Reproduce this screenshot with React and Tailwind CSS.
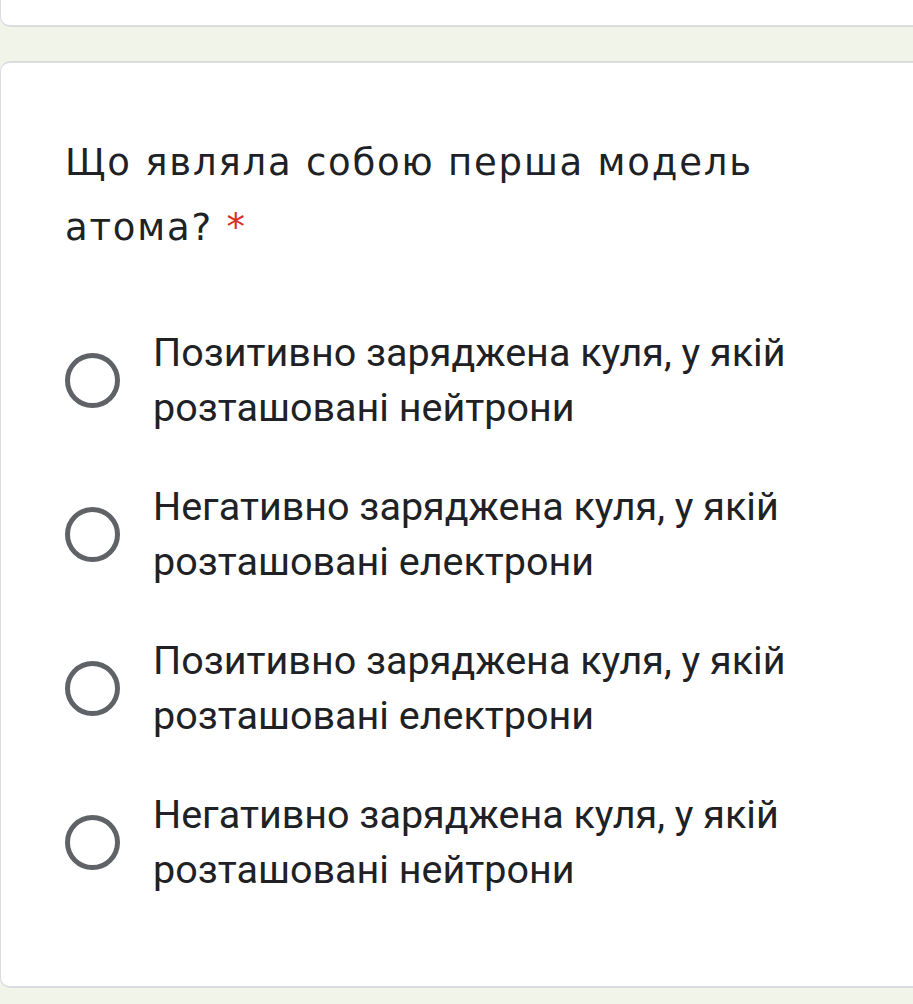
import React from "react";

const options = [
  ["Позитивно заряджена куля, у якій", "розташовані нейтрони"],
  ["Негативно заряджена куля, у якій", "розташовані електрони"],
  ["Позитивно заряджена куля, у якій", "розташовані електрони"],
  ["Негативно заряджена куля, у якій", "розташовані нейтрони"],
];

export default function App() {
  return (
    <div className="min-h-[1004px] h-[1004px] overflow-hidden bg-[#f0f4e9]">
      <div className="h-[27px] bg-white rounded-bl-[10px] border-b-[2px] border-l border-[#dadce0] mr-[-20px]" />
      <div className="mt-[34px] h-[927px] bg-white rounded-l-[10px] border-y-[2px] border-l border-[#dadce0] mr-[-20px] pl-[64px] pt-[67px]">
        <div
          className="text-[37px] leading-[65px] tracking-[1.8px] text-[#202124]"
          style={{ fontFamily: '"DejaVu Sans", "Open Sans", sans-serif' }}
        >
          Що являла собою перша модель
          <br />
          атома? <span className="text-[#d93025]">*</span>
        </div>
        <div className="mt-[65px] flex flex-col gap-[44px]">
          {options.map((lines, i) => (
            <div key={i} className="flex items-center gap-[33px]">
              <div className="w-[55px] h-[55px] rounded-full border-[5px] border-[#5f6368] shrink-0" />
              <div
                className="text-[39.5px] leading-[55px] text-[#202124]"
                style={{ fontFamily: 'Roboto, "Noto Sans", sans-serif' }}
              >
                {lines[0]}
                <br />
                {lines[1]}
              </div>
            </div>
          ))}
        </div>
      </div>
    </div>
  );
}
